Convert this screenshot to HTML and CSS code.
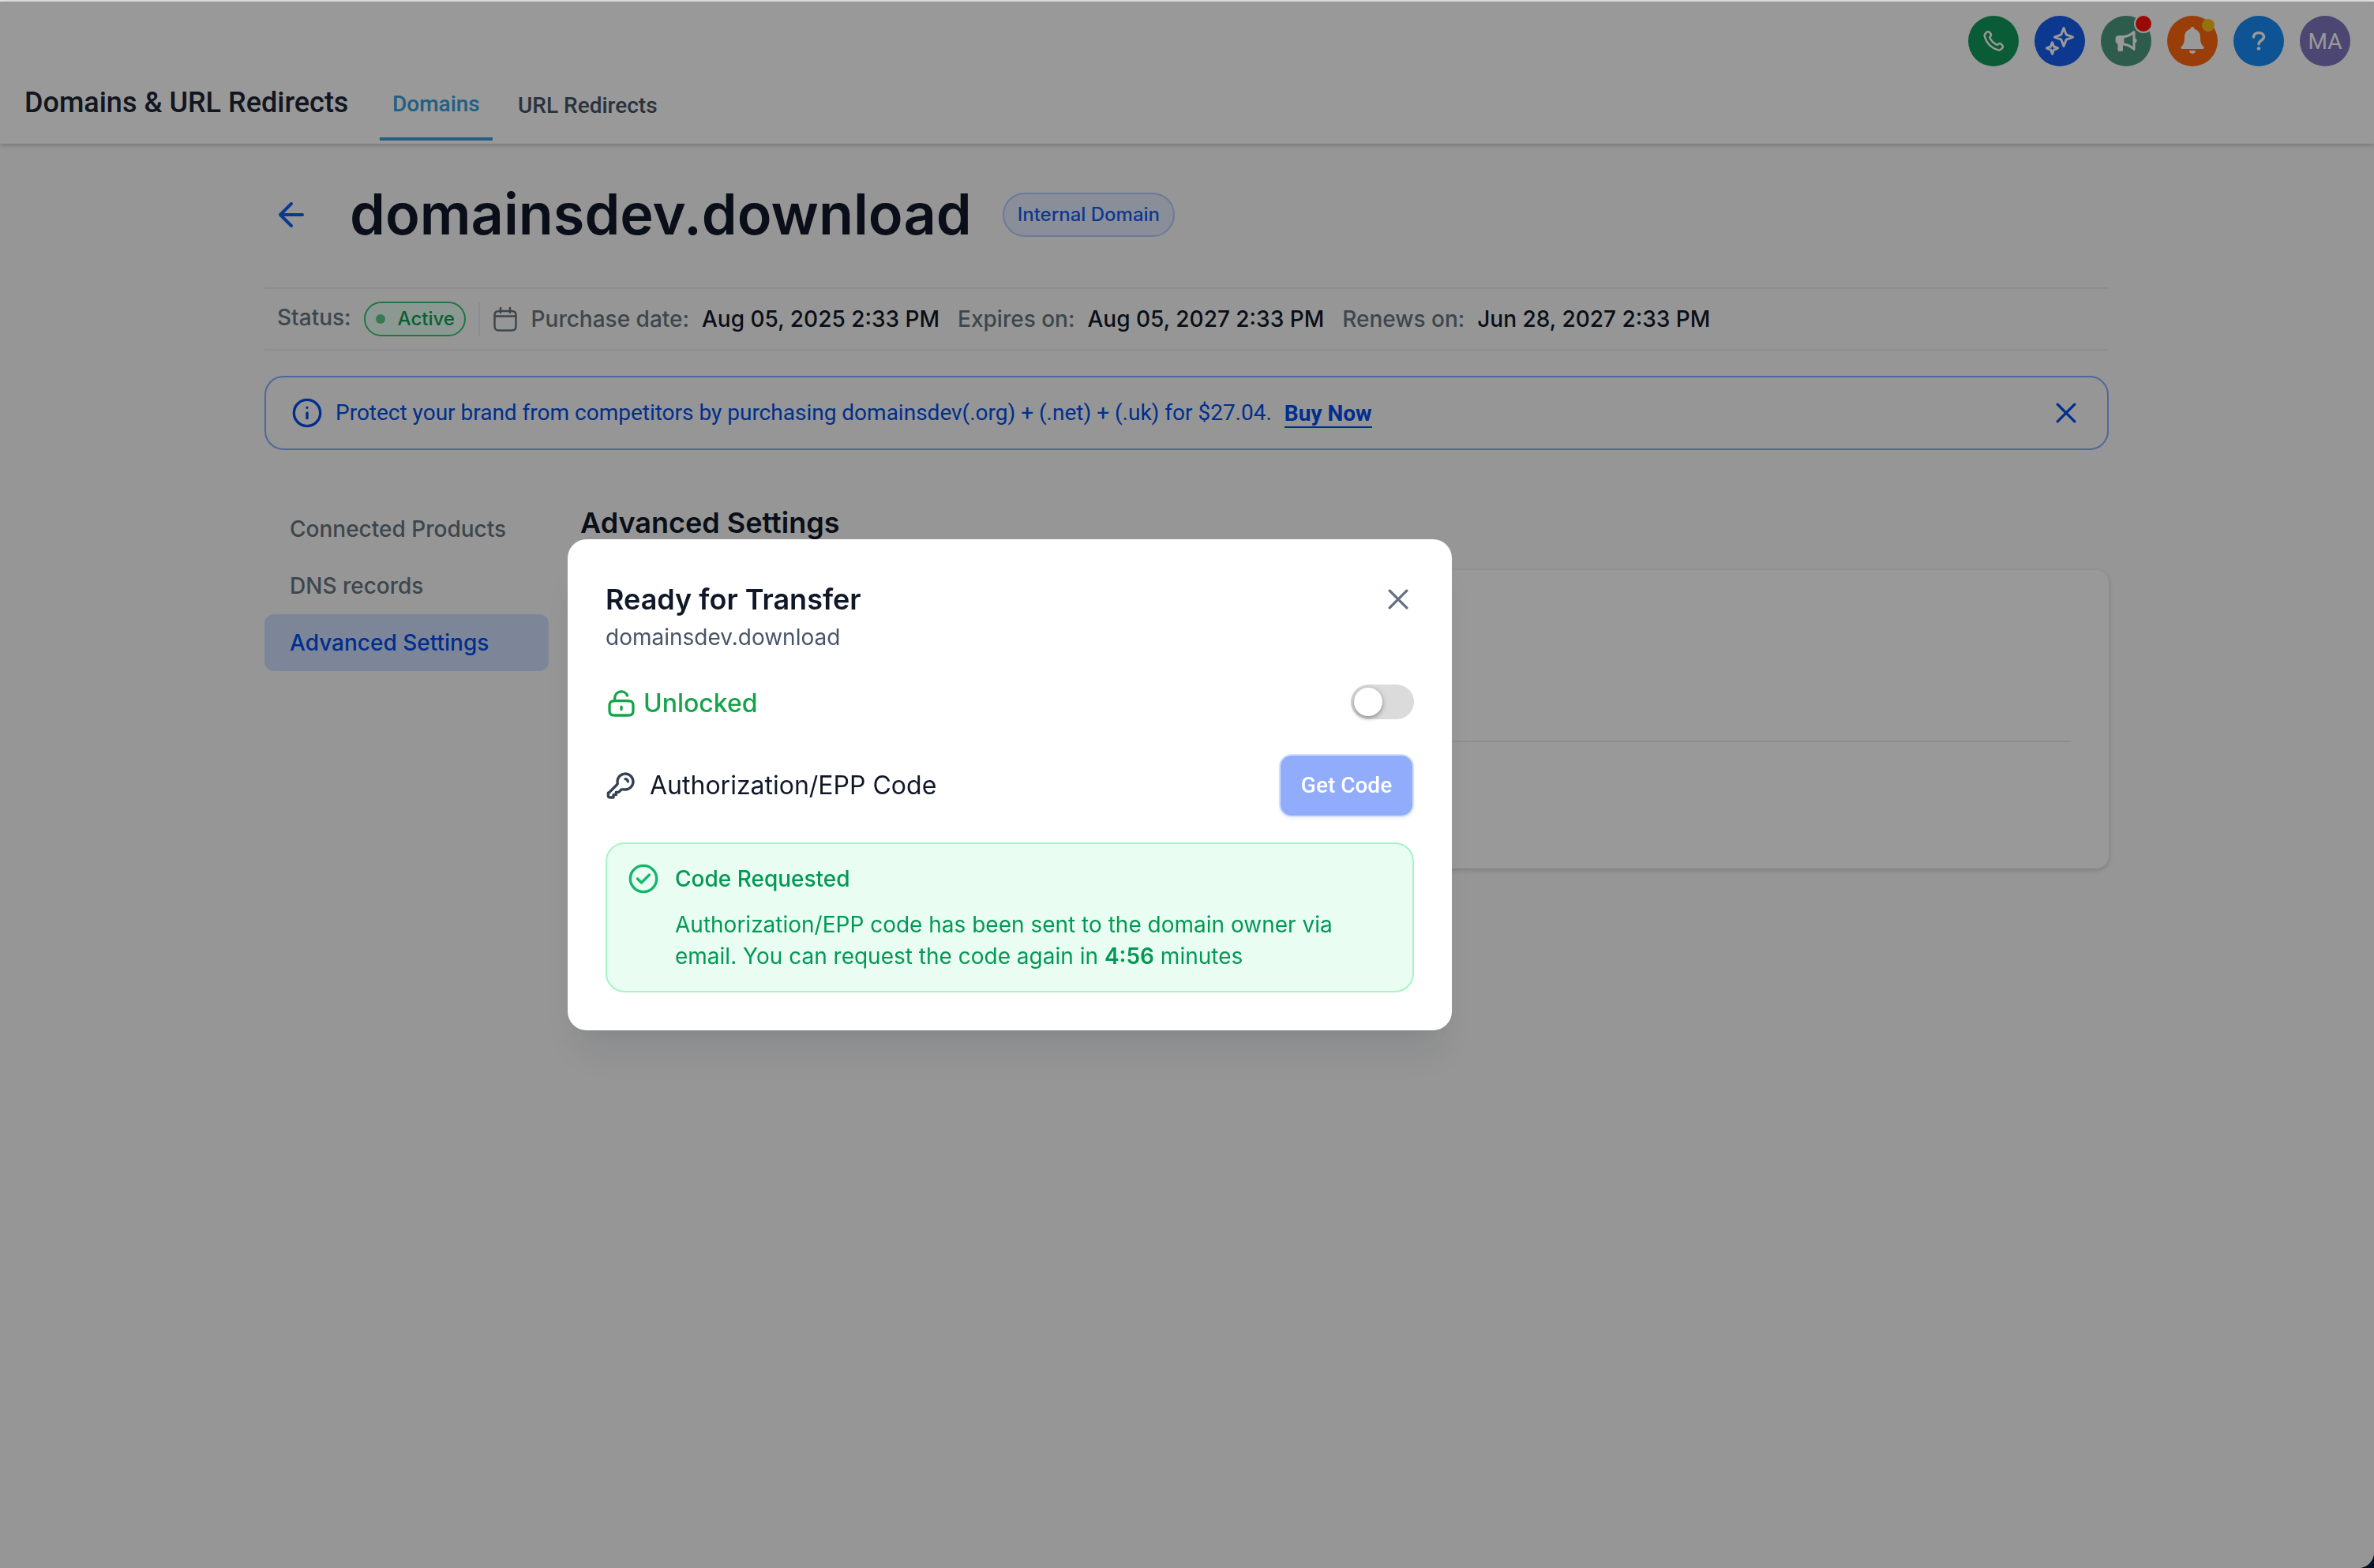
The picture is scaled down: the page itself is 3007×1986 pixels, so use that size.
FILE: index.html
```html
<!DOCTYPE html>
<html lang="en">
<head>
    <meta charset="UTF-8">
    <meta name="viewport" content="width=device-width, initial-scale=1.0">
    <title>Domains & URL Redirects</title>
    <link rel="stylesheet" href="styles.css">
</head>
<body>

<div class="app">
    <header class="topbar">
        <div class="actions">
            <div class="circle phone">
                <svg width="30" height="30" viewBox="0 0 24 24"><path d="M8.38 8.853a14.6 14.6 0 0 0 2.847 4.01 14.6 14.6 0 0 0 4.01 2.847c.124.06.187.09.265.112.28.082.625.023.862-.147.067-.048.124-.105.239-.219.35-.35.524-.524.7-.639a2 2 0 0 1 2.18 0c.176.115.35.29.7.64l.195.194c.532.531.797.797.942 1.082a2 2 0 0 1 0 1.806c-.145.285-.41.551-.942 1.082l-.157.158c-.53.53-.795.794-1.155.997-.4.224-1.02.386-1.478.384-.413-.001-.695-.081-1.26-.241a19 19 0 0 1-8.283-4.874A19 19 0 0 1 3.17 7.761c-.16-.564-.24-.846-.241-1.26a3.4 3.4 0 0 1 .384-1.477c.202-.36.467-.625.997-1.155l.157-.158c.532-.53.798-.797 1.083-.941a2 2 0 0 1 1.805 0c.286.144.551.41 1.083.942l.195.194c.35.35.524.525.638.7a2 2 0 0 1 0 2.18c-.114.177-.289.352-.638.701-.115.114-.172.172-.22.238-.17.238-.228.582-.147.862.023.08.053.142.113.266Z"/></svg>
            </div>
            <div class="circle sparkle">
                <svg width="40" height="40" viewBox="0 0 40 40"><path d="M25 3.500l3.200 8.300 8.300 3.200-8.300 3.200-3.200 8.300-3.200-8.300-8.300-3.200 8.300-3.200zM10.500 21.700l2 5.300 5 2-5 2-2 5.300-2-5.300-5-2 5-2z"/></svg>
            </div>
            <div class="circle megaphone">
                <svg width="32" height="32" viewBox="0 0 32 32"><path class="solid" d="M12 9H6.500C3.500 9 2.500 11 2.500 14.500S4 19 5.500 20v7c0 1.500.5 2 2 2H10c1.500 0 2-.5 2-2v-7z"/><path d="M12 10.500c5 0 10-2.500 14-6v22c-4-4-9-6.500-14-6.500z"/><path class="solid" d="M27 12.500c3.500.5 3.500 5.500 0 6z"/></svg>
                <span class="dot dot-red"></span>
            </div>
            <div class="circle bell">
                <svg width="32" height="36" viewBox="0 0 32 36"><path class="solid" d="M16 1c1.500 0 2.500 1 2.500 2.800 5.300 1.400 7.500 5.700 7.500 10.200 0 6.500 1 9 4 12 1.200 1.300.8 3-1 3H3c-1.800 0-2.200-1.700-1-3 3-3 4-5.500 4-12 0-4.500 2.200-8.800 7.500-10.200C13.500 2 14.500 1 16 1zM12 31h8c0 5.300-8 5.300-8 0z"/></svg>
                <span class="dot dot-yellow"></span>
            </div>
            <div class="circle help">
                <svg width="24" height="28" viewBox="0 0 24 28"><path d="M5.500 9C5.500 5.500 8.500 3.500 12 3.500s6.500 2 6.500 5.300c0 4.200-6.500 4.700-6.500 8.900"/><circle class="solid" cx="12" cy="23.500" r="2.300"/></svg>
            </div>
            <div class="circle avatar">MA</div>
        </div>
        <nav class="nav">
            <h1>Domains &amp; URL Redirects</h1>
            <a class="tab active">Domains</a>
            <a class="tab">URL Redirects</a>
        </nav>
    </header>

    <main class="page">
        <div class="title-row">
            <svg class="back" width="48" height="48" viewBox="0 0 24 24"><path d="M19 12H5m0 0 7 7m-7-7 7-7"/></svg>
            <h2>domainsdev.download</h2>
            <span class="tag">Internal Domain</span>
        </div>

        <div class="status-row">
            <span class="status-label">Status:</span>
            <span class="status-pill"><i></i>Active</span>
            <span class="divider"></span>
            <svg class="calendar" width="36" height="36" viewBox="0 0 36 36"><path d="M4.500 14.500h27M10 8h16c4 0 5.500 1.500 5.500 5v14c0 4-1.500 5.500-5.500 5.500H10c-4 0-5.500-1.500-5.500-5.500V13c0-3.500 1.500-5 5.500-5zM12 4v6M24 4v6"/></svg>
            <span class="label">Purchase date:</span>
            <span class="value">Aug 05, 2025 2:33 PM</span>
            <span class="label">Expires on:</span>
            <span class="value">Aug 05, 2027 2:33 PM</span>
            <span class="label">Renews on:</span>
            <span class="value">Jun 28, 2027 2:33 PM</span>
        </div>

        <div class="banner">
            <svg width="40" height="40" viewBox="0 0 24 24"><path d="M12 16v-4m0-4h.01M22 12c0 5.523-4.477 10-10 10S2 17.523 2 12 6.477 2 12 2s10 4.477 10 10Z"/></svg>
            <p>Protect your brand from competitors by purchasing domainsdev(.org) + (.net) + (.uk) for $27.04.</p>
            <a class="buy">Buy Now</a>
            <svg class="close" width="40" height="40" viewBox="0 0 24 24"><path d="M18.500 5.500l-13 13m0-13 13 13"/></svg>
        </div>

        <div class="columns">
            <aside class="sidebar">
                <a>Connected Products</a>
                <a>DNS records</a>
                <a class="selected">Advanced Settings</a>
            </aside>
            <section class="content">
                <h3>Advanced Settings</h3>
                <div class="card">
                    <div class="card-row"></div>
                    <div class="card-row"></div>
                </div>
            </section>
        </div>
    </main>
</div>

<div class="overlay"></div>

<div class="modal">
    <div class="modal-head">
        <div>
            <h4>Ready for Transfer</h4>
            <p>domainsdev.download</p>
        </div>
        <svg class="modal-close" width="40" height="40" viewBox="0 0 24 24"><path d="M18.500 5.500l-13 13m0-13 13 13"/></svg>
    </div>
    <div class="modal-row lock-row">
        <svg width="40" height="40" viewBox="0 0 24 24"><path d="M7 10V8a5 5 0 0 1 9.580-2M12 14.500v2M7.800 21h8.400c1.680 0 2.520 0 3.162-.327a3 3 0 0 0 1.311-1.311C21 18.720 21 17.880 21 16.200v-1.400c0-1.680 0-2.520-.327-3.162a3 3 0 0 0-1.311-1.311C18.720 10 17.880 10 16.200 10H7.800c-1.680 0-2.520 0-3.162.327a3 3 0 0 0-1.311 1.311C3 12.280 3 13.120 3 14.800v1.400c0 1.680 0 2.520.327 3.162a3 3 0 0 0 1.311 1.311C5.280 21 6.120 21 7.800 21Z"/></svg>
        <span class="unlocked">Unlocked</span>
        <span class="toggle"></span>
    </div>
    <div class="modal-row code-row">
        <svg width="40" height="40" viewBox="0 0 24 24"><path d="M17 9a2 2 0 0 0-2-2m0 8a6 6 0 1 0-5.946-5.193c.058.434.087.651.068.789a.9.900 0 0 1-.117.346c-.68.121-.187.240-.426.479l-5.110 5.110c-.173.173-.260.260-.322.361a1 1 0 0 0-.120.290C2 17.296 2 17.418 2 17.663V19.400c0 .560 0 .840.109 1.054a1 1 0 0 0 .437.437C2.760 21 3.040 21 3.600 21H6v-2h2v-2h2l1.580-1.580c.238-.238.357-.357.478-.425a.9.900 0 0 1 .346-.117c.138-.020.355.010.789.068Q13.590 15 15 15Z"/></svg>
        <span class="code-label">Authorization/EPP Code</span>
        <button class="get-code">Get Code</button>
    </div>
    <div class="alert">
        <svg width="40" height="40" viewBox="0 0 24 24"><path d="m7.500 12 3 3 6-6M22 12c0 5.523-4.477 10-10 10S2 17.523 2 12 6.477 2 12 2s10 4.477 10 10Z"/></svg>
        <div>
            <h5>Code Requested</h5>
            <p>Authorization/EPP code has been sent to the domain owner via email. You can request the code again in <b>4:56</b> minutes</p>
        </div>
    </div>
</div>

</body>
</html>
```
FILE: styles.css
```css
* {
    box-sizing: border-box;
}
body {
    margin: 0;
    font-family: Inter, sans-serif;
    font-size: 28px;
    background-color: #021228;
    overflow: hidden;
}
h1, h2, h3, h4, h5, p {
    margin: 0;
}
svg {
    fill: none;
    stroke: currentColor;
    stroke-width: 2;
    stroke-linecap: round;
    stroke-linejoin: round;
    flex-shrink: 0;
}
.app {
    height: 1986px;
    background-color: #fafafa;
    border-top: 2px solid #e2e2e2;
    border-bottom-right-radius: 20px;
}
.topbar {
    height: 180px;
    background-color: #fff;
    box-shadow: 0 2px 6px rgba(0,0,0,0.22);
    font-family: Roboto, sans-serif;
}
.actions {
    display: flex;
    justify-content: flex-end;
    gap: 20px;
    height: 82px;
    padding: 18px 30px 0 0;
}
.circle {
    position: relative;
    display: flex;
    align-items: center;
    justify-content: center;
    width: 64px;
    height: 64px;
    border-radius: 50%;
    color: #fff;
}
.circle svg {
    stroke-width: 3;
}
.circle .solid {
    fill: currentColor;
    stroke: none;
}
.phone { background-color: #11995a; }
.circle.phone svg { stroke-width: 2; }
.sparkle { background-color: #155eef; }
.megaphone { background-color: #4b9980; }
.bell { background-color: #ff6610; }
.circle.bell svg { margin-top: -2px; }
.help { background-color: #188bf6; }
.circle.help svg { stroke-width: 3.5; }
.avatar {
    background-color: #7f76be;
    font-size: 28px;
}
.dot {
    position: absolute;
    border-radius: 50%;
}
.dot-red {
    top: -2px;
    right: -2px;
    width: 24px;
    height: 24px;
    background-color: #ff120d;
    border: 2px solid #fff;
    clip-path: inset(2px 2px 0 0);
}
.dot-yellow {
    top: 4px;
    right: 4px;
    width: 16px;
    height: 16px;
    background-color: #fabc18;
}
.nav {
    display: flex;
    height: 98px;
    padding-left: 31px;
    font-weight: 500;
}
.nav h1 {
    width: 450px;
    padding-top: 25px;
    font-size: 36px;
    line-height: 42px;
    font-weight: 500;
    color: #1d2634;
    white-space: nowrap;
}
.tab {
    height: 94px;
    padding: 32px 16px 0;
    margin-right: 16px;
    line-height: 36px;
    color: #475467;
}
.tab.active {
    padding-top: 30px;
    width: 143px;
    border-bottom: 4px solid #38a0db;
    color: #38a0db;
}
.page {
    width: 2336px;
    margin-left: 335px;
}
.title-row {
    display: flex;
    align-items: center;
    height: 180px;
    margin-bottom: 2px;
    padding-left: 10px;
}
.back {
    color: #155eef;
}
.title-row h2 {
    margin: -3px 0 0 50px;
    font-size: 72px;
    font-weight: 600;
    color: #101828;
}
.tag {
    margin-left: 39px;
    height: 56px;
    padding: 0 17px;
    border: 2px solid #b2ccff;
    border-radius: 28px;
    background-color: #e6edff;
    color: #155eef;
    font-size: 24px;
    font-weight: 500;
    line-height: 52px;
}
.status-row {
    display: flex;
    align-items: center;
    height: 80px;
    padding-left: 16px;
    border-top: 2px solid #eaecec;
    border-bottom: 2px solid #eaecec;
    font-weight: 500;
}
.status-label, .label {
    color: #667680;
}
.status-label {
    margin-top: -4px;
}
.status-pill {
    display: flex;
    align-items: center;
    width: 129px;
    height: 44px;
    margin-left: 16px;
    padding-left: 13px;
    border: 2px solid #34c471;
    border-radius: 22px;
    background-color: #eafff4;
    color: #109e50;
    font-size: 24px;
    line-height: 40px;
}
.status-pill i {
    width: 12px;
    height: 12px;
    margin-right: 16px;
    border-radius: 50%;
    background-color: #64c78c;
}
.divider {
    width: 2px;
    height: 44px;
    margin: 0 14px 0 16px;
    background-color: #eaecec;
}
.calendar {
    color: #667680;
    stroke-width: 2.5;
    margin-right: 15px;
}
.value {
    margin: 0 23px 0 16px;
    color: #101828;
}
.banner {
    display: flex;
    align-items: center;
    height: 94px;
    margin-top: 32px;
    padding: 0 32px;
    border: 2px solid #84adff;
    border-radius: 24px;
    color: #004eeb;
    font-family: Roboto, sans-serif;
}
.banner p {
    margin: -1px 0 0 16px;
}
.buy {
    margin-left: 16px;
    padding-top: 3px;
    border-bottom: 2px solid #004eeb;
    font-weight: 700;
    line-height: 33px;
}
.close {
    margin-left: auto;
}
.columns {
    display: flex;
    margin-top: 64px;
}
.sidebar {
    width: 360px;
    font-weight: 500;
    color: #667680;
}
.sidebar a {
    display: block;
    height: 72px;
    padding-left: 32px;
    line-height: 72px;
}
.sidebar .selected {
    border-radius: 12px;
    background-color: #d1e0ff;
    color: #004eeb;
}
.content {
    flex: 1;
    padding-left: 40px;
}
.content h3 {
    height: 88px;
    padding-top: 6px;
    font-size: 36px;
    line-height: 44px;
    font-weight: 600;
    color: #101828;
}
.card {
    height: 378px;
    padding: 0 48px;
    border-radius: 16px;
    background-color: #fff;
    box-shadow: 0 2px 6px rgba(16,24,40,0.18);
}
.card-row:first-child {
    height: 218px;
    border-bottom: 2px solid #eaecf0;
}
.overlay {
    position: fixed;
    inset: 2px 0 0 0;
    z-index: 2;
    background-color: rgba(0,0,0,0.4);
    border-bottom-right-radius: 20px;
}
.modal {
    position: fixed;
    top: 683px;
    left: 719px;
    z-index: 4;
    width: 1120px;
    height: 622px;
    padding: 48px;
    border-radius: 24px;
    background-color: #fff;
    box-shadow: 0 40px 48px -8px rgba(16,24,40,0.08), 0 16px 16px -8px rgba(16,24,40,0.03);
}
.modal-head {
    display: flex;
    justify-content: space-between;
    height: 104px;
}
.modal h4 {
    margin-top: 6px;
    font-size: 36px;
    line-height: 44px;
    font-weight: 600;
    color: #101828;
}
.modal-head p {
    margin-top: 6px;
    line-height: 40px;
    color: #475467;
}
.modal-close {
    margin-top: 8px;
    color: #667085;
}
.modal-row {
    display: flex;
    align-items: center;
    font-size: 32px;
}
.lock-row {
    height: 108px;
    color: #16a34a;
}
.lock-row svg {
    margin-top: 3px;
}
.unlocked {
    margin: 2px 0 0 8px;
    font-weight: 500;
}
.toggle {
    width: 80px;
    height: 44px;
    margin-left: auto;
    padding: 4px;
    border-radius: 22px;
    background-color: #dbdbdb;
}
.toggle::before {
    content: "";
    display: block;
    width: 36px;
    height: 36px;
    border-radius: 50%;
    background-color: #fff;
    box-shadow: 0 2px 6px rgba(0,0,0,0.4);
}
.code-row {
    height: 80px;
    margin-top: 12px;
    color: #344054;
}
.code-label {
    margin: -1px 0 0 16px;
    color: #101828;
}
.get-code {
    width: 171px;
    height: 80px;
    margin-left: auto;
    padding: 0 0 2px;
    border: 2px solid #d1e0ff;
    border-radius: 16px;
    background-color: #91acfa;
    color: #fff;
    font-family: Roboto, sans-serif;
    font-size: 28px;
    font-weight: 500;
    box-shadow: 0 2px 4px rgba(16,24,40,0.05);
}
.alert {
    display: flex;
    height: 190px;
    margin-top: 32px;
    padding: 24px;
    border: 2px solid #a6f4c5;
    border-radius: 24px;
    background-color: #e9fdf2;
    color: #039855;
    line-height: 40px;
}
.alert svg {
    margin-left: 2px;
    color: #12b76a;
}
.alert div {
    width: 860px;
    margin-left: 20px;
}
.alert h5 {
    margin-bottom: 18px;
    font-size: 28px;
    font-weight: 500;
}
.alert b {
    font-weight: 600;
}
```
